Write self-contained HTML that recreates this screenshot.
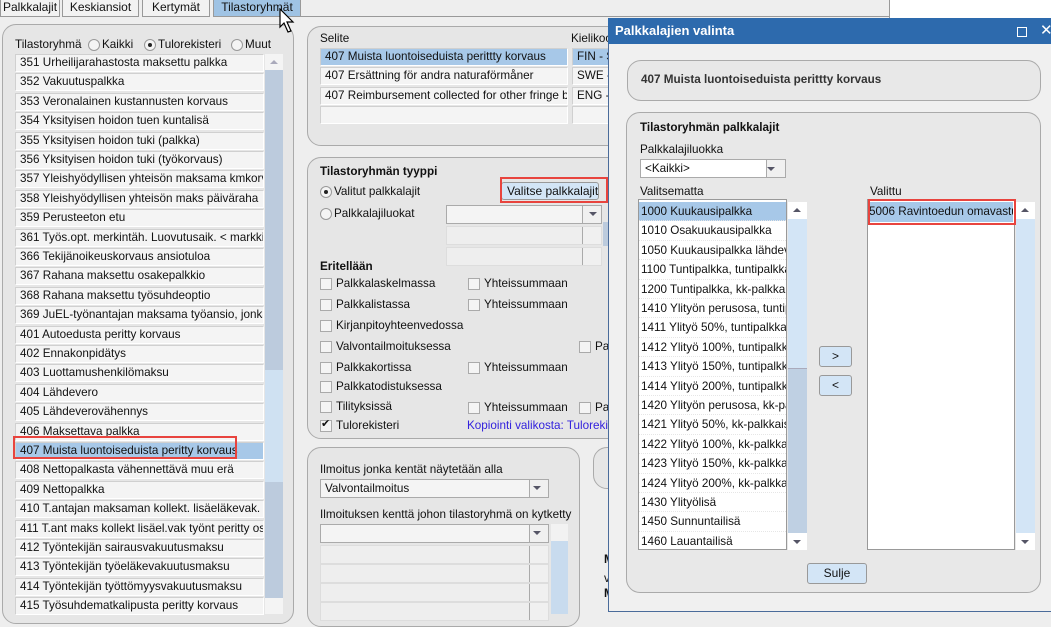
<!DOCTYPE html>
<html><head><meta charset="utf-8"><style>
*{box-sizing:border-box;margin:0;padding:0}
body{width:1051px;height:612px;overflow:hidden;background:#eeeeee;font-family:"Liberation Sans",sans-serif;font-size:12px;color:#111;position:relative}
.a{position:absolute}
.tab{position:absolute;top:0;height:17px;border:1px solid #999;border-top:none;background:#f2f2f2;font-size:12px;line-height:14px;text-align:center}
.panel{position:absolute;border:1px solid #aaa;border-radius:14px;background:#e6e6e6}
.row{position:absolute;height:18px;background:#f4f4f4;border:1px solid #d0d0d0;border-right-color:#fff;border-bottom-color:#fff;line-height:16px;padding-left:4px;white-space:nowrap;overflow:hidden;font-size:11.7px}
.sel{background:#a7c8e8}
.lbl{position:absolute;white-space:nowrap;font-size:11.7px}
.b{font-weight:bold}
.cb{position:absolute;width:12px;height:12px;border:1px solid #aaa;background:#f4f4f4}
.rad{position:absolute;width:12px;height:12px;border:1px solid #999;border-radius:50%;background:#f4f4f4}
.combo{position:absolute;height:19px;border:1px solid #aaa;background:#f4f4f4;font-size:11.7px;line-height:17px;padding-left:4px;white-space:nowrap}
.combo:after{content:"";position:absolute;right:0;top:0;width:18px;height:17px;border-left:1px solid #aaa;background:#f0f0f0}
.arr{position:absolute;width:0;height:0;border-left:4px solid transparent;border-right:4px solid transparent;border-top:4px solid #556}
.dis{background:#eeeeee;border-color:#ddd}
.red{position:absolute;border:2px solid #e8443e}
.lr{position:absolute;height:19.4px;line-height:19px;padding-left:2px;white-space:nowrap;overflow:hidden;font-size:11.7px;border-bottom:1px dotted #e6e6e6}
.btn{position:absolute;border:1px solid #999;border-radius:3px;background:#d3e5f6;text-align:center;font-size:12px;white-space:nowrap}
</style></head><body>
<div class="tab" style="left:0;width:60px;text-align:left;padding-left:2px">Palkkalajit</div>
<div class="tab" style="left:62px;width:77px">Keskiansiot</div>
<div class="tab" style="left:142px;width:68px">Kertymät</div>
<div class="tab" style="left:213px;width:88px;background:#9fc3e4">Tilastoryhmät</div>
<div class="a" style="left:301px;top:16px;width:589px;height:1px;background:#999"></div>
<div class="a" style="left:889px;top:0;width:1px;height:18px;background:#999"></div>
<div class="a" style="left:890px;top:0;width:161px;height:18px;background:#fff"></div>
<svg class="a" style="left:279px;top:8px;z-index:5" width="20" height="28"><path d="M1 1 L1 19 L5 15 L9 24 L12 23 L8 14 L14 14 Z" fill="#fff" stroke="#000" stroke-width="1.2"/></svg>

<div class="panel" style="left:2px;top:24px;width:292px;height:600px"></div>
<div class="lbl" style="left:15px;top:38px">Tilastoryhmä</div>
<div class="rad" style="left:88px;top:39px"></div><div class="lbl" style="left:102px;top:38px">Kaikki</div>
<div class="rad" style="left:144px;top:39px"></div><div class="a" style="left:148px;top:43px;width:4px;height:4px;border-radius:50%;background:#222"></div><div class="lbl" style="left:158px;top:38px">Tulorekisteri</div>
<div class="rad" style="left:231px;top:39px"></div><div class="lbl" style="left:245px;top:38px">Muut</div>
<div class="a" style="left:265px;top:54px;width:18px;height:560px;background:#bccbdd"></div>
<div class="a" style="left:265px;top:54px;width:18px;height:16px;background:#f4f4f4"></div>
<div class="arr" style="left:270px;top:60px;border-top:none;border-bottom:4px solid #aab"></div>
<div class="a" style="left:265px;top:370px;width:18px;height:112px;background:#cfe1f2"></div>
<div class="a" style="left:265px;top:598px;width:18px;height:16px;background:#f4f4f4"></div>
<div id="ll"></div>
<div class="red" style="left:13px;top:436px;width:224px;height:23px"></div>

<div class="panel" style="left:307px;top:26px;width:320px;height:120px"></div>
<div class="lbl" style="left:320px;top:32px">Selite</div>
<div class="lbl" style="left:571px;top:32px">Kielikoo</div>
<div class="row sel" style="left:320px;top:48px;width:248px">407 Muista luontoiseduista perittty korvaus</div>
<div class="row" style="left:320px;top:67px;width:248px">407 Ersättning för andra naturaförmåner</div>
<div class="row" style="left:320px;top:87px;width:248px">407 Reimbursement collected for other fringe be</div>
<div class="row" style="left:320px;top:106px;width:248px"></div>
<div class="row sel" style="left:572px;top:48px;width:40px">FIN - S</div>
<div class="row" style="left:572px;top:67px;width:40px">SWE -</div>
<div class="row" style="left:572px;top:87px;width:40px">ENG -</div>
<div class="row" style="left:572px;top:106px;width:40px"></div>

<div class="panel" style="left:307px;top:157px;width:320px;height:282px"></div>
<div class="lbl b" style="left:320px;top:165px">Tilastoryhmän tyyppi</div>
<div class="rad" style="left:320px;top:186px"></div><div class="a" style="left:324px;top:190px;width:4px;height:4px;border-radius:50%;background:#222"></div>
<div class="lbl" style="left:334px;top:185px">Valitut palkkalajit</div>
<div class="btn" style="left:501px;top:182px;width:98px;height:18px;line-height:16px;text-align:left;padding-left:5px">Valitse palkkalajit</div>
<div class="red" style="left:500px;top:177px;width:108px;height:26px"></div>
<div class="rad" style="left:320px;top:208px"></div><div class="lbl" style="left:334px;top:207px">Palkkalajiluokat</div>
<div class="combo" style="left:446px;top:205px;width:156px"></div><div class="arr" style="left:589px;top:212px"></div>
<div class="combo dis" style="left:446px;top:226px;width:156px"></div>
<div class="combo dis" style="left:446px;top:247px;width:156px"></div>
<div class="a" style="left:603px;top:222px;width:6px;height:24px;background:#bccbdd"></div>
<div class="lbl b" style="left:320px;top:260px">Eritellään</div>
<div class="cb" style="left:320px;top:278px"></div><div class="lbl" style="left:336px;top:277px">Palkkalaskelmassa</div>
<div class="cb" style="left:468px;top:278px"></div><div class="lbl" style="left:484px;top:277px">Yhteissummaan</div>
<div class="cb" style="left:320px;top:299px"></div><div class="lbl" style="left:336px;top:298px">Palkkalistassa</div>
<div class="cb" style="left:468px;top:299px"></div><div class="lbl" style="left:484px;top:298px">Yhteissummaan</div>
<div class="cb" style="left:320px;top:320px"></div><div class="lbl" style="left:336px;top:319px">Kirjanpitoyhteenvedossa</div>
<div class="cb" style="left:320px;top:341px"></div><div class="lbl" style="left:336px;top:340px">Valvontailmoituksessa</div>
<div class="cb" style="left:579px;top:341px"></div><div class="lbl" style="left:595px;top:340px">Pa</div>
<div class="cb" style="left:320px;top:362px"></div><div class="lbl" style="left:336px;top:361px">Palkkakortissa</div>
<div class="cb" style="left:468px;top:362px"></div><div class="lbl" style="left:484px;top:361px">Yhteissummaan</div>
<div class="cb" style="left:320px;top:381px"></div><div class="lbl" style="left:336px;top:380px">Palkkatodistuksessa</div>
<div class="cb" style="left:320px;top:401px"></div><div class="lbl" style="left:336px;top:400px">Tilityksissä</div>
<div class="cb" style="left:468px;top:402px"></div><div class="lbl" style="left:484px;top:401px">Yhteissummaan</div>
<div class="cb" style="left:579px;top:402px"></div><div class="lbl" style="left:595px;top:401px">Pa</div>
<div class="cb" style="left:320px;top:420px"></div><div class="lbl" style="left:321px;top:417px;font-size:11px">✔</div><div class="lbl" style="left:336px;top:419px">Tulorekisteri</div>
<div class="lbl" style="left:467px;top:419px;color:#3322dd">Kopiointi valikosta: Tulorekis</div>

<div class="panel" style="left:307px;top:447px;width:273px;height:180px"></div>
<div class="panel" style="left:593px;top:447px;width:40px;height:42px"></div>
<div class="lbl" style="left:320px;top:463px">Ilmoitus jonka kentät näytetään alla</div>
<div class="combo" style="left:320px;top:479px;width:229px">Valvontailmoitus</div><div class="arr" style="left:533px;top:486px"></div>
<div class="lbl" style="left:320px;top:508px">Ilmoituksen kenttä johon tilastoryhmä on kytketty</div>
<div class="combo" style="left:320px;top:524px;width:229px"></div><div class="arr" style="left:533px;top:531px"></div>
<div class="combo dis" style="left:320px;top:545px;width:229px"></div>
<div class="combo dis" style="left:320px;top:564px;width:229px"></div>
<div class="combo dis" style="left:320px;top:583px;width:229px"></div>
<div class="combo dis" style="left:320px;top:602px;width:229px"></div>
<div class="a" style="left:551px;top:524px;width:17px;height:90px;background:#c8dbee"></div>
<div class="a" style="left:551px;top:524px;width:17px;height:17px;background:#f2f2f2"></div>
<div class="lbl b" style="left:604px;top:553px">M</div><div class="lbl" style="left:604px;top:572px">v</div><div class="lbl b" style="left:604px;top:587px">M</div>

<div class="a" style="left:608px;top:18px;width:443px;height:594px;background:#f0f0f0;border-left:1px solid #4a6b9a;border-bottom:1px solid #4a6b9a"></div>
<div class="a" style="left:608px;top:18px;width:443px;height:26px;background:#2d6aad"></div>
<div class="lbl b" style="left:615px;top:23px;color:#fff;font-size:13px">Palkkalajien valinta</div>
<div class="a" style="left:1017px;top:27px;width:10px;height:10px;border:1.5px solid #fff"></div>
<div class="lbl" style="left:1040px;top:21px;color:#fff;font-size:15px">✕</div>
<div class="panel" style="left:627px;top:60px;width:414px;height:41px;background:#e8e8e8"></div>
<div class="lbl b" style="left:641px;top:73px;color:#333">407 Muista luontoiseduista perittty korvaus</div>
<div class="panel" style="left:626px;top:112px;width:415px;height:481px;background:#e8e8e8"></div>
<div class="lbl b" style="left:640px;top:121px">Tilastoryhmän palkkalajit</div>
<div class="lbl" style="left:640px;top:143px">Palkkalajiluokka</div>
<div class="combo" style="left:640px;top:159px;width:146px;background:#fff">&lt;Kaikki&gt;</div><div class="arr" style="left:767px;top:167px"></div>
<div class="lbl" style="left:640px;top:185px">Valitsematta</div>
<div class="lbl" style="left:870px;top:185px">Valittu</div>
<div class="a" style="left:638px;top:199px;width:149px;height:351px;background:#fff;border:1px solid #999;overflow:hidden" id="lv"></div>
<div class="a" style="left:788px;top:202px;width:19px;height:348px;background:#bfd0e3"></div>
<div class="a" style="left:788px;top:202px;width:19px;height:17px;background:#fff"></div>
<div class="arr" style="left:793px;top:208px;border-top:none;border-bottom:4px solid #556"></div>
<div class="a" style="left:788px;top:219px;width:19px;height:150px;background:#d3e5f6;border-bottom:1px solid #aab"></div>
<div class="a" style="left:788px;top:533px;width:19px;height:17px;background:#fff"></div><div class="arr" style="left:793px;top:540px"></div>
<div class="a" style="left:867px;top:199px;width:148px;height:351px;background:#fff;border:1px solid #999"></div>
<div class="a" style="left:869px;top:202px;width:144px;height:20px;background:#a7c8e8;line-height:20px;font-size:11.7px;white-space:nowrap;overflow:hidden">5006 Ravintoedun omavastu</div>
<div class="red" style="left:868px;top:199px;width:148px;height:26px"></div>
<div class="a" style="left:1016px;top:202px;width:19px;height:348px;background:#d3e5f6"></div>
<div class="a" style="left:1016px;top:202px;width:19px;height:17px;background:#fff"></div>
<div class="arr" style="left:1021px;top:208px;border-top:none;border-bottom:4px solid #556"></div>
<div class="a" style="left:1016px;top:533px;width:19px;height:17px;background:#fff"></div><div class="arr" style="left:1021px;top:540px"></div>
<div class="btn" style="left:819px;top:346px;width:33px;height:21px;line-height:18px">&gt;</div>
<div class="btn" style="left:819px;top:375px;width:33px;height:21px;line-height:18px">&lt;</div>
<div class="btn" style="left:807px;top:563px;width:60px;height:21px;line-height:19px">Sulje</div>

<script>
var L=["351 Urheilijarahastosta maksettu palkka","352 Vakuutuspalkka","353 Veronalainen kustannusten korvaus","354 Yksityisen hoidon tuen kuntalisä","355 Yksityisen hoidon tuki (palkka)","356 Yksityisen hoidon tuki (työkorvaus)","357 Yleishyödyllisen yhteisön maksama kmkorv","358 Yleishyödyllisen yhteisön maks päiväraha","359 Perusteeton etu","361 Työs.opt. merkintäh. Luovutusaik. < markkii","366 Tekijänoikeuskorvaus ansiotuloa","367 Rahana maksettu osakepalkkio","368 Rahana maksettu työsuhdeoptio","369 JuEL-työnantajan maksama työansio, jonka","401 Autoedusta peritty korvaus","402 Ennakonpidätys","403 Luottamushenkilömaksu","404 Lähdevero","405 Lähdeverovähennys","406 Maksettava palkka","407 Muista luontoiseduista peritty korvaus","408 Nettopalkasta vähennettävä muu erä","409 Nettopalkka","410 T.antajan maksaman kollekt. lisäeläkevak. M","411 T.ant maks kollekt lisäel.vak työnt peritty os","412 Työntekijän sairausvakuutusmaksu","413 Työntekijän työeläkevakuutusmaksu","414 Työntekijän työttömyysvakuutusmaksu","415 Työsuhdematkalipusta peritty korvaus"];
var h="";L.forEach(function(t,i){h+='<div class="row'+(i==20?' sel':'')+'" style="left:15px;top:'+(54+i*19.4)+'px;width:249px">'+t+'</div>'});
document.getElementById("ll").innerHTML=h;
var V=["1000 Kuukausipalkka","1010 Osakuukausipalkka","1050 Kuukausipalkka lähdev","1100 Tuntipalkka, tuntipalkka","1200 Tuntipalkka, kk-palkkai","1410 Ylityön perusosa, tuntip","1411 Ylityö 50%, tuntipalkkai","1412 Ylityö 100%, tuntipalkk","1413 Ylityö 150%, tuntipalkk","1414 Ylityö 200%, tuntipalkk","1420 Ylityön perusosa, kk-palk","1421 Ylityö 50%, kk-palkkais","1422 Ylityö 100%, kk-palkka","1423 Ylityö 150%, kk-palkka","1424 Ylityö 200%, kk-palkka","1430 Ylityölisä","1450 Sunnuntailisä","1460 Lauantailisä"];
h="";V.forEach(function(t,i){h+='<div class="lr" style="left:0;top:'+(2+i*19.4)+'px;width:147px;'+(i==0?'background:#a7c8e8':'')+'">'+t+'</div>'});
document.getElementById("lv").innerHTML=h;
</script>
</body></html>
